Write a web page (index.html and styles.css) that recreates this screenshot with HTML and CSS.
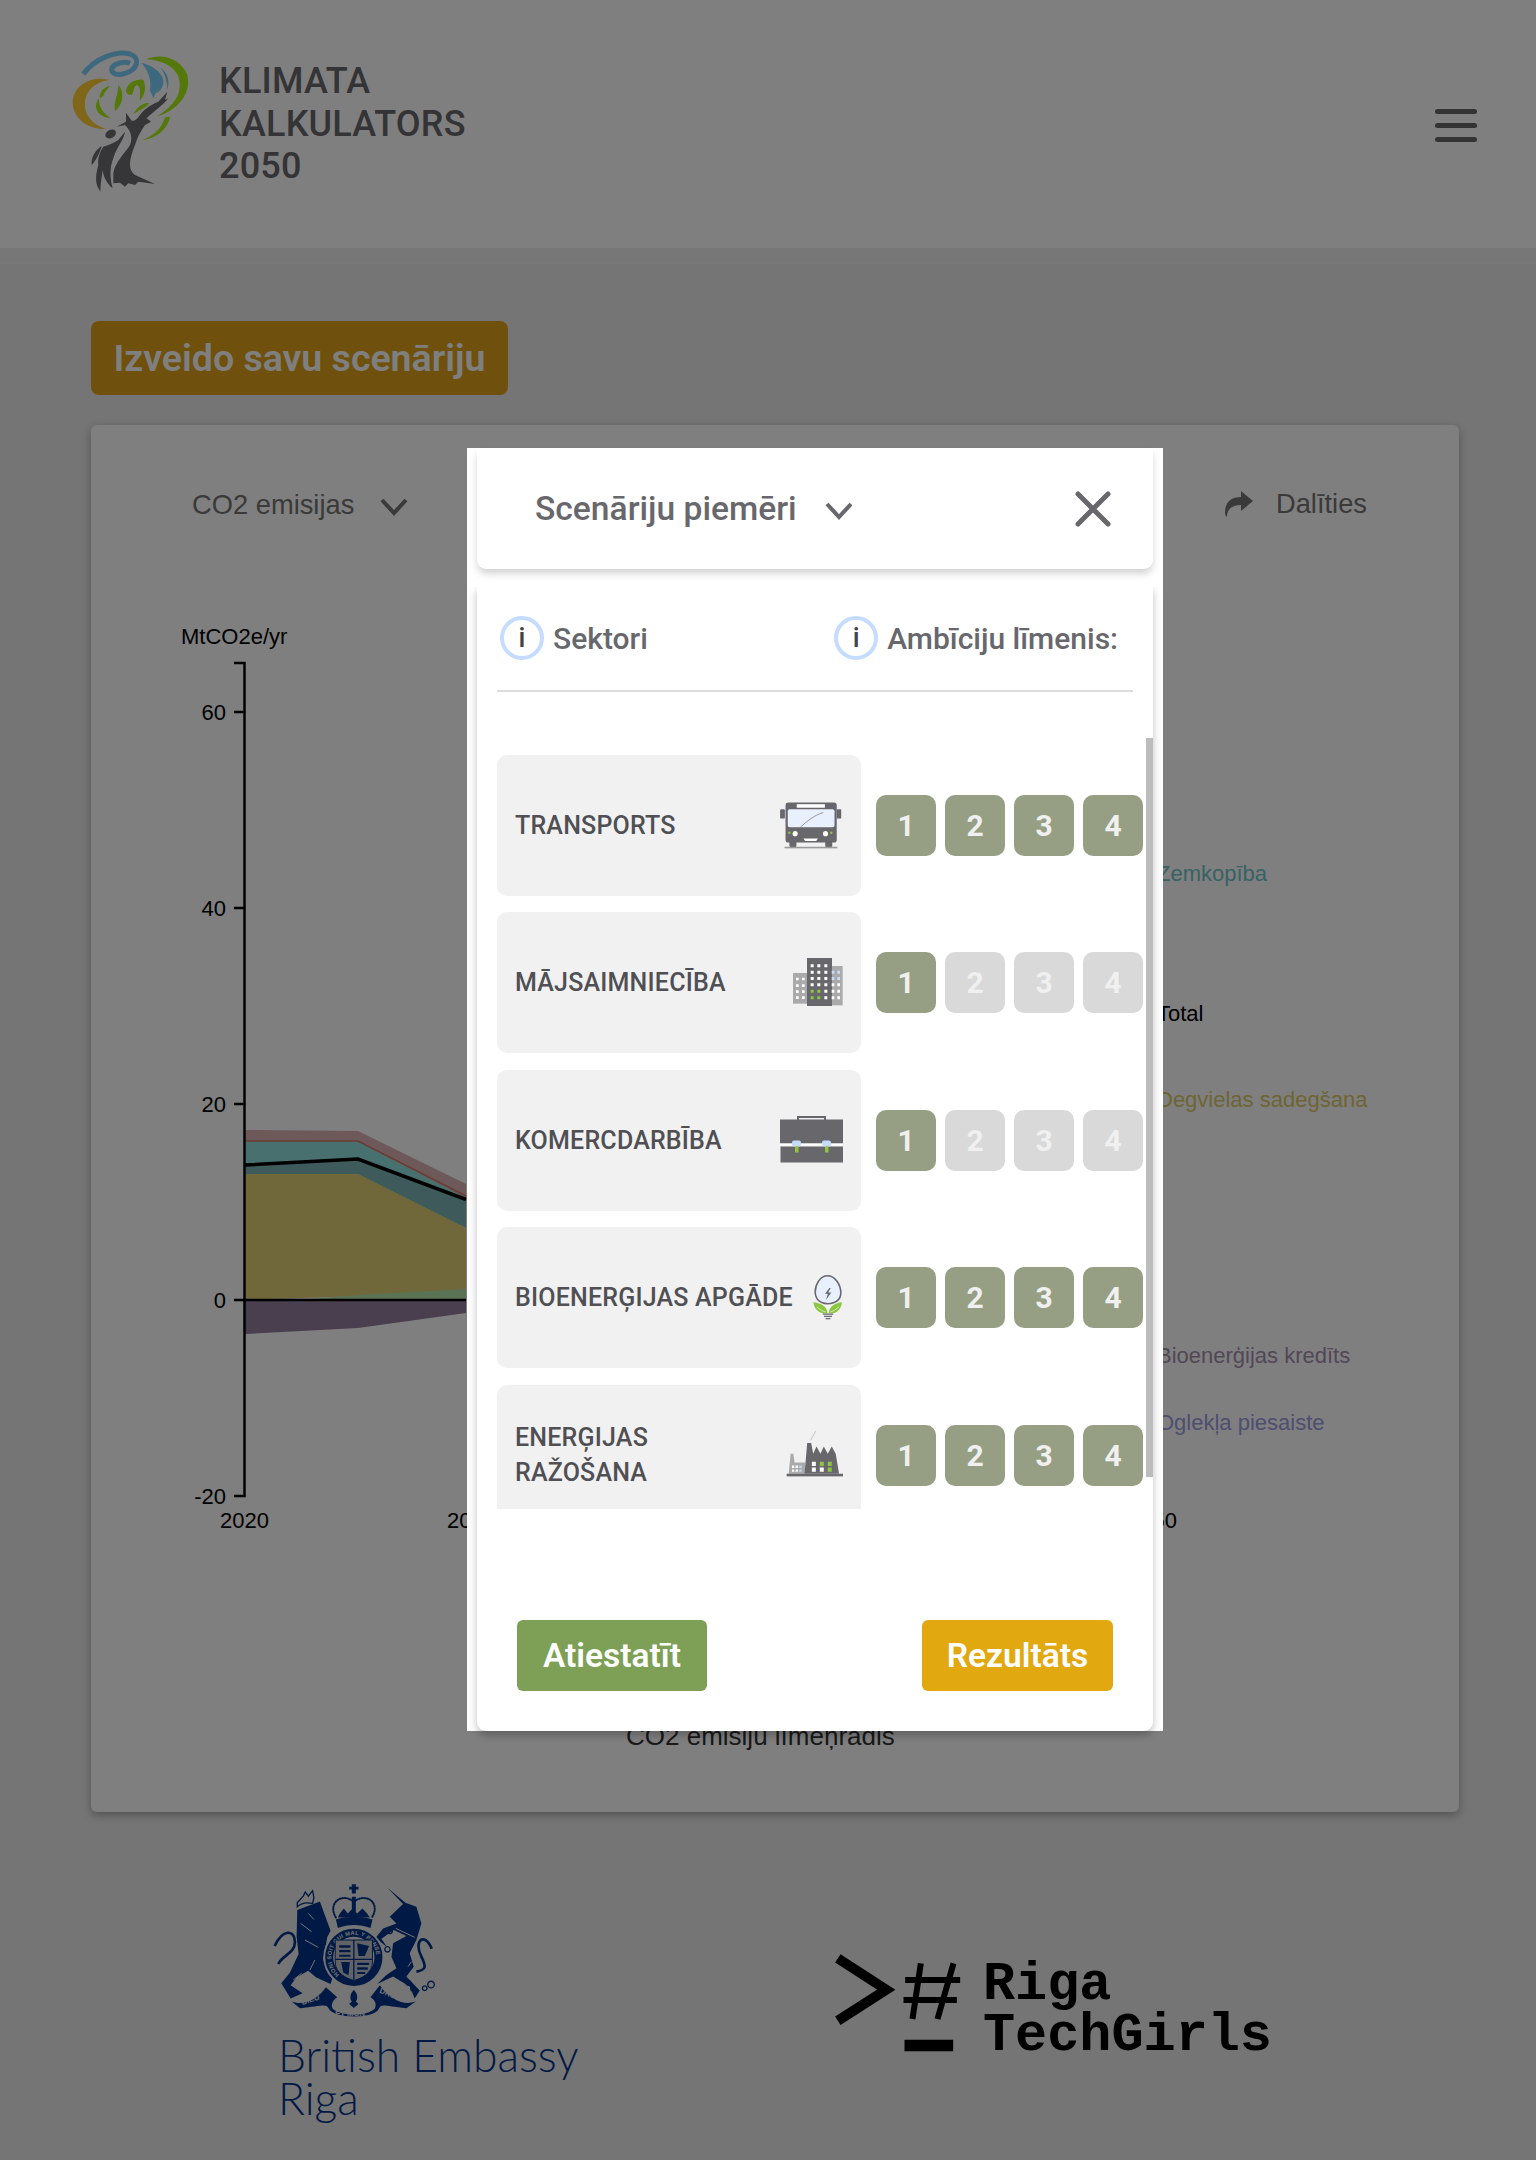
FILE: index.html
```html
<!DOCTYPE html>
<html lang="lv">
<head>
<meta charset="utf-8">
<title>Klimata kalkulators 2050</title>
<link rel="stylesheet" href="styles.css">
</head>
<body>
<header class="site-header">
  <svg class="tree-logo" viewBox="0 0 480 510" aria-hidden="true">
    <path class="c-blue-s" d="M100 132C135 85 200 60 240 72C272 84 265 118 225 130C195 140 175 125 190 108C205 95 230 95 240 100"/>
    <path class="c-blue" d="M273 98C305 105 335 125 340 150C342 170 330 185 318 190L325 170L310 205L300 180C305 150 295 120 273 98Z"/>
    <path class="c-blue" d="M330 112C350 125 362 150 352 180C350 150 345 130 330 112Z"/>
    <path class="c-green" d="M288 88C340 65 395 90 412 135C425 190 385 240 320 260C375 225 395 190 388 150C380 110 335 90 288 88Z"/>
    <path class="c-amber" d="M178 150C120 135 70 170 68 215C68 265 115 300 170 297C130 285 100 255 105 215C108 180 140 155 178 150Z"/>
    <path class="c-green" d="M180 168C160 170 145 190 150 205L160 197C165 182 175 176 180 168Z"/>
    <path class="c-green" d="M147 205C130 225 135 260 182 265C160 250 145 230 147 205Z"/>
    <path class="c-green" d="M205 165C225 185 220 225 195 243C190 215 205 195 205 165Z"/>
    <path class="c-green" d="M228 180C235 155 265 145 280 150C290 175 285 195 270 212C268 195 275 175 262 165C250 168 255 180 245 195C235 195 228 190 228 180Z"/>
    <path class="c-green" d="M250 252C260 235 280 215 298 220C285 235 270 240 250 252Z"/>
    <path class="c-green" d="M360 260C355 295 320 325 278 330C315 315 335 295 345 262Z"/>
    <path class="c-dark" d="M190 430C195 395 225 370 240 345C250 320 240 300 225 285L200 290L228 275L228 248L245 272C255 275 262 265 270 255C280 240 300 225 325 215L352 185L345 210L355 205C340 225 310 245 290 265L303 275L285 285C275 300 265 315 255 345C235 395 235 420 255 435L315 462L265 455L255 465L235 460L225 470L210 458L190 460Z"/>
    <ellipse class="c-dark" cx="182" cy="312" rx="17" ry="12" transform="rotate(-30 182 312)"/>
    <path class="c-dark" d="M160 350C175 345 190 340 205 330L225 305C222 330 200 350 190 385C180 410 178 440 188 475C170 460 160 440 158 420C155 445 150 470 152 485C135 465 135 440 145 405C142 385 150 365 160 350Z"/>
    <path class="c-dark" d="M155 348C135 360 122 385 125 405C135 395 150 370 155 348Z"/>
  </svg>
  <div class="brand">KLIMATA<br>KALKULATORS<br>2050</div>
  <div class="hamburger"><span></span><span></span><span></span></div>
</header>
<div class="header-band"></div>

<main class="content">
  <button class="cta">Izveido savu scenāriju</button>
  <section class="card">
    <div class="card-top">
      <div class="select">CO2 emisijas
        <svg class="chev" viewBox="0 0 28 18"><path d="M2 2L14 15L26 2"/></svg>
      </div>
      <div class="share">
        <svg class="share-ico" viewBox="0 0 28 26"><path d="M28 10L16 0V6C6 6 0 11 0 22C0 24 1 25 2 26C2 18 7 14 16 14V20Z"/></svg>
        Dalīties
      </div>
    </div>
    <svg class="chart" viewBox="91 620 1368 950">
      <path fill="#dab2b2" d="M245 1130L358 1131L466 1184V1200H245Z"/>
      <path fill="#8ee0de" d="M245 1141L358 1141L466 1198V1225H245Z"/>
      <path fill="#7eb4b4" d="M245 1165L358 1159L466 1199V1228L358 1174H245Z"/>
      <path fill="#e0ce74" d="M245 1174H358L466 1228V1290L358 1296L245 1300Z"/>
      <path fill="#b4e6aa" d="M300 1300L358 1295L466 1289V1300Z"/>
      <path fill="#947e9c" d="M245 1300H466V1313L358 1328L245 1334Z"/>
      <path class="thin" d="M245 1141L358 1141L466 1196"/>
      <path class="total" d="M245 1165L358 1159L466 1199.500"/>
      <path class="axis" d="M234 663H244.500V1496H234M234 712H244.500M234 908H244.500M234 1104H244.500M234 1300H466M234 1496H244.500M244.500 1300V1313"/>
      <text class="lab" x="181" y="644">MtCO2e/yr</text>
      <text class="lab end" x="226" y="720">60</text>
      <text class="lab end" x="226" y="916">40</text>
      <text class="lab end" x="226" y="1112">20</text>
      <text class="lab end" x="226" y="1308">0</text>
      <text class="lab end" x="226" y="1504">-20</text>
      <text class="lab" x="220" y="1528">2020</text>
      <text class="lab" x="447" y="1528">2030</text>
      <text class="lab" x="1128" y="1528">2050</text>
      <text class="lab c1" x="1157" y="881">Zemkopība</text>
      <text class="lab" x="1157" y="1021">Total</text>
      <text class="lab c2" x="1157" y="1107">Degvielas sadegšana</text>
      <text class="lab c3" x="1157" y="1363">Bioenerģijas kredīts</text>
      <text class="lab c4" x="1157" y="1430">Oglekļa piesaiste</text>
    </svg>
    <div class="chart-title">CO2 emisiju līmeņrādis</div>
  </section>
</main>

<footer class="logos">
  <div class="embassy">
    <svg class="arms" viewBox="90 60 520 420" aria-hidden="true">
      <defs>
        <path id="garter" d="M298 344A68 68 0 1 1 386 344"/>
      </defs>
      <path class="navy" d="M172 150L240 124L272 212L262 232L250 300L282 342L272 372L228 352L205 332L170 352L152 376L188 400L152 416L124 370L150 338L176 282L170 230Z"/>
      <path class="gap" d="M205 160L222 178M182 190L215 215M195 240L235 262M210 330L225 300M160 360L185 340"/>
      <path class="navy-line wide" d="M104 258C128 206 165 208 165 246C165 280 128 285 115 312"/>
      <path class="navy-line" d="M172 128L190 108L196 96L205 108L218 92L222 112L218 130C200 126 185 128 172 140Z"/>
      <path class="navy" d="M442 82L497 128L530 140L545 190L530 240L510 280L522 320L500 350L540 392L525 416L510 380L460 350L412 372L440 345L470 325L455 290L460 250L500 228L462 210L425 236L442 262L420 244L405 236L430 205L470 190L450 170L490 132Z"/>
      <path class="gap" d="M468 205L525 232M505 320L515 305M520 335L510 340"/>
      <path class="navy-line wide" d="M576 266C555 215 520 240 545 290C560 320 560 330 530 335"/>
      <path class="navy-line" d="M450 205A8 8 0 1 0 450.100 205M443 260A8 8 0 1 0 443.100 260M506 362A7 7 0 1 0 506.100 362M520 380A7 7 0 1 0 520.100 380M555 378A7 7 0 1 0 555.100 378M574 364A10 10 0 1 0 574.100 364"/>
      <circle class="halo" cx="342" cy="292" r="92"/>
      <path class="navy" d="M336 72H348V80H356V88H348V100H336V88H328V80H336Z"/>
      <path class="navy-line dots" d="M288 172C262 130 305 95 342 125C380 95 424 130 396 172"/>
      <path class="navy" d="M336 110H348V165H336ZM300 160L312 145L324 160L338 145L352 160L368 145L382 160L390 172H294Z"/>
      <path class="navy" d="M288 178C310 168 375 168 398 178L392 204C360 192 325 192 294 204Z"/>
      <circle class="ring" cx="342" cy="292" r="74"/>
      <text class="garter-text"><textPath href="#garter">HONI SOIT QUI MAL Y PENSE</textPath></text>
      <path class="shield" d="M286 240H398V306C398 340 365 355 342 362C320 355 286 340 286 306Z"/>
      <path class="navy-line" d="M342 240V362M286 298H398"/>
      <path class="navy" d="M298 256H332V263H298ZM298 270H332V277H298ZM298 284H332V290H298ZM352 250L388 258L375 288H356ZM352 308H388V315H352ZM352 322H384V329H352ZM352 336H376V342H352ZM304 306L330 306L326 346L310 338Z"/>
      <path class="navy" d="M155 425C195 440 235 415 258 382L292 412C280 420 272 432 278 446C300 470 385 470 405 446C412 432 405 420 392 412L420 376C450 415 490 440 528 425L500 445C440 440 425 430 418 445C408 478 280 478 266 445C258 430 240 440 180 445Z"/>
      <text class="rib-text" x="188" y="435" transform="rotate(-18 188 435)">DIEU</text>
      <text class="rib-text" x="286" y="468">ET MON</text>
      <text class="rib-text" x="418" y="398" transform="rotate(22 418 398)">DROIT</text>
      <path class="navy" d="M342 390C352 398 356 415 348 425L356 432L342 444L328 432L336 425C328 415 332 398 342 390Z"/>
    </svg>
    <div class="embassy-name">British Embassy<br>Riga</div>
  </div>
  <div class="techgirls">
    <svg class="tg-mark" viewBox="105 100 380 300" aria-hidden="true">
      <path class="tg-line" d="M113 113L258 207L113 300"/>
      <path class="tg-hash" d="M315 178H480M310 238H470M362 128L337 295M460 128L412 295"/>
      <path d="M313 357H459V392H313Z"/>
    </svg>
    <div class="tg-name">Riga<br>TechGirls</div>
  </div>
</footer>

<div class="overlay"></div>

<aside class="modal">
  <div class="modal-head">
    <span class="modal-title">Scenāriju piemēri</span>
    <svg class="chev small" viewBox="0 0 28 18"><path d="M2 2L14 15L26 2"/></svg>
    <svg class="close" viewBox="0 0 36 36"><path d="M3 3L33 33M33 3L3 33"/></svg>
  </div>
  <div class="modal-body">
    <div class="cols">
      <div class="col-title"><span class="info">i</span>Sektori</div>
      <div class="col-title"><span class="info">i</span>Ambīciju līmenis:</div>
    </div>
    <div class="scroll">
      <div class="row">
        <div class="sector"><span class="sector-name">TRANSPORTS</span>
          <svg class="ico bus" viewBox="50 55 200 150">
            <path fill="#e8f0fe" d="M62 72H240V122H62Z"/>
            <rect class="g" x="55" y="81" width="15" height="29" rx="3"/><rect class="g" x="232" y="81" width="14" height="29" rx="3"/>
            <rect class="g" x="84" y="170" width="22" height="30" rx="6"/><rect class="g" x="196" y="170" width="22" height="30" rx="6"/>
            <rect class="g" x="72" y="60" width="160" height="125" rx="9"/>
            <rect fill="#fff" x="107" y="65" width="88" height="11"/>
            <rect fill="#e8f0fe" x="79" y="81" width="146" height="56" rx="6"/>
            <path class="hair" d="M118 137C140 118 160 100 190 91"/>
            <circle fill="#fff" cx="102" cy="157" r="8"/><circle fill="#fff" cx="197" cy="157" r="8"/>
            <circle fill="#8cc63f" cx="84" cy="154" r="4"/><circle fill="#8cc63f" cx="215" cy="154" r="4"/>
            <path fill="#fff" d="M128 172H173L168 180H133Z"/><rect fill="#999" x="69" y="198" width="165" height="5"/>
          </svg>
        </div>
        <div class="levels"><button class="lvl on">1</button><button class="lvl on">2</button><button class="lvl on">3</button><button class="lvl on">4</button></div>
      </div>
      <div class="row">
        <div class="sector"><span class="sector-name">MĀJSAIMNIECĪBA</span>
          <svg class="ico flats" viewBox="96 533 150 144">
            <rect fill="#aaa" x="96" y="578" width="45" height="92"/><rect fill="#aaa" x="205" y="557" width="40" height="118"/>
            <rect class="g" x="138" y="533" width="75" height="144"/>
            <path class="win" d="M105 592h8v8h-8zM123 592h8v8h-8zM105 612h8v8h-8zM123 612h8v8h-8zM105 630h8v8h-8zM123 630h8v8h-8zM105 648h8v8h-8zM123 648h8v8h-8z"/>
            <path class="win" d="M149 552h9v9h-9zM169 552h9v9h-9zM190 552h9v9h-9zM149 571h9v9h-9zM169 571h9v9h-9zM190 571h9v9h-9zM149 590h9v9h-9zM169 590h9v9h-9zM190 590h9v9h-9zM149 609h9v9h-9zM169 609h9v9h-9zM190 609h9v9h-9zM190 628h9v9h-9zM190 648h9v9h-9z"/>
            <path fill="#8cc63f" d="M149 628h9v9h-9zM169 628h9v9h-9zM149 648h9v9h-9zM169 648h9v9h-9z"/>
            <path fill="#c6dcfa" d="M212 571h8v9h-8zM229 571h8v9h-8zM212 590h8v9h-8zM229 590h8v9h-8z"/>
            <path class="win" d="M212 609h8v9h-8zM229 609h8v9h-8zM212 628h8v9h-8zM229 628h8v9h-8zM212 648h8v9h-8zM229 648h8v9h-8z"/>
          </svg>
        </div>
        <div class="levels"><button class="lvl on">1</button><button class="lvl">2</button><button class="lvl">3</button><button class="lvl">4</button></div>
      </div>
      <div class="row">
        <div class="sector"><span class="sector-name">KOMERCDARBĪBA</span>
          <svg class="ico case" viewBox="0 0 63 47">
            <path d="M18 5V1.500H45V5" fill="none" stroke="#67676c" stroke-width="2"/>
            <path class="g" d="M0 4H63V28H0Z"/><path class="g" d="M.5 31H63V47H.5Z"/>
            <rect fill="#fff" y="28" width="63" height="2"/>
            <rect fill="#c6dcfa" x="12" y="25" width="9" height="6" rx="2"/><rect fill="#c6dcfa" x="42" y="25" width="9" height="6" rx="2"/>
            <rect fill="#8cc63f" x="15" y="31" width="3.500" height="6"/><rect fill="#8cc63f" x="45" y="31" width="3.500" height="6"/>
          </svg>
        </div>
        <div class="levels"><button class="lvl on">1</button><button class="lvl">2</button><button class="lvl">3</button><button class="lvl">4</button></div>
      </div>
      <div class="row">
        <div class="sector"><span class="sector-name">BIOENERĢIJAS APGĀDE</span>
          <svg class="ico bulb" viewBox="120 65 95 147">
            <path fill="#e8f0fe" d="M168 68C195 68 213 100 213 125C213 145 200 158 168 160C135 158 126 140 126 122C126 100 142 68 168 68Z"/>
            <path fill="none" stroke="#67676c" stroke-width="5" d="M166 71C190 71 208 100 208 125C208 145 195 158 166 160C137 158 127 140 127 122C127 100 142 71 166 71Z"/>
            <path class="g" d="M172 110L158 128H167L161 148L178 124H168L176 110Z"/>
            <path fill="#8cc63f" d="M121 155C140 157 165 165 166 190C140 192 125 180 121 155ZM212 155C193 157 172 165 170 190C195 192 208 180 212 155Z"/>
            <path fill="none" stroke="#fff" stroke-width="2" d="M132 170C142 178 150 184 160 186M202 170C192 178 184 184 175 186"/>
            <path class="g" d="M151 191H184V195H151ZM155 198H180V202H155ZM160 205H175V209H160Z"/>
          </svg>
        </div>
        <div class="levels"><button class="lvl on">1</button><button class="lvl on">2</button><button class="lvl on">3</button><button class="lvl on">4</button></div>
      </div>
      <div class="row">
        <div class="sector"><span class="sector-name">ENERĢIJAS<br>RAŽOŠANA</span>
          <svg class="ico factory" viewBox="44 540 172 141">
            <path class="hair light" d="M118 570L133 542"/>
            <path fill="#aaa" d="M52 670L58 610H66L70 636H102V670Z"/>
            <path class="g" d="M100 670L108 577H120L126 610L136 588L148 610L158 588L170 610L182 588L194 610L204 670Z"/>
            <rect class="g" x="46" y="670" width="170" height="8"/>
            <path fill="#fff" d="M62 645h7v8h-7zM73 645h7v8h-7zM62 657h7v7h-7zM73 657h7v7h-7z"/>
            <path fill="#c6dcfa" d="M84 645h7v8h-7zM84 657h7v7h-7z"/>
            <path class="win" d="M122 634h12v13h-12zM146 651h12v13h-12zM122 651h12v13h-12z"/>
            <path fill="#8cc63f" d="M146 634h12v13h-12zM170 634h12v13h-12zM170 651h12v13h-12z"/>
          </svg>
        </div>
        <div class="levels"><button class="lvl on">1</button><button class="lvl on">2</button><button class="lvl on">3</button><button class="lvl on">4</button></div>
      </div>
    </div>
    <div class="scrollbar"></div>
    <div class="actions">
      <button class="act reset">Atiestatīt</button>
      <button class="act result">Rezultāts</button>
    </div>
  </div>
</aside>
</body>
</html>
```
FILE: styles.css
```css
* { box-sizing: border-box; }
html, body { margin: 0; padding: 0; }
body {
  width: 1536px;
  height: 2160px;
  overflow: hidden;
  position: relative;
  background: #eaeaea;
  font-family: "Roboto", "Liberation Sans", sans-serif;
  color: #67676c;
}
button { font-family: inherit; border: 0; cursor: pointer; }

/* header */
.site-header {
  height: 248px;
  background: #fff;
  display: flex;
  align-items: center;
  padding: 0 59px 0 50px;
}
.tree-logo { width: 160px; height: 170px; margin-bottom: 18px; flex: none; }
.c-blue { fill: #7cd0fa; }
.c-blue-s { fill: none; stroke: #7cd0fa; stroke-width: 15; }
.c-green { fill: #aaf014; }
.c-amber { fill: #ffcc32; }
.c-dark { fill: #6c6c70; }
.brand {
  margin-left: 9px;
  font-size: 36px;
  line-height: 42.5px;
  font-weight: 500;
  color: #68686c;
  letter-spacing: .2px;
}
.hamburger { margin: 2px 0 0 auto; display: flex; flex-direction: column; gap: 9px; width: 42px; }
.hamburger span { display: block; height: 5px; border-radius: 3px; background: #666; }
.header-band { height: 16px; background: #eeeeee; border-bottom: 1px solid #f2f2f2; }

/* content */
.content { padding: 57px 77px 0 91px; }
.cta {
  display: block;
  width: 417px;
  height: 74px;
  border-radius: 8px;
  background: #dea21a;
  color: #fff;
  font-size: 37.5px;
  font-weight: 600;
  padding: 0;
}
.card {
  margin-top: 30px;
  height: 1387px;
  background: #fff;
  border-radius: 6px;
  box-shadow: 0 3px 8px rgba(0, 0, 0, .3);
  display: flex;
  flex-direction: column;
}
.card-top {
  height: 195px;
  padding: 58px 92px 0 101px;
  display: flex;
  justify-content: space-between;
  align-items: flex-start;
  font-family: "Liberation Sans", sans-serif;
  font-size: 27.300px;
  color: #747474;
}
.select { display: flex; align-items: center; gap: 26px; height: 44px; }
.share { display: flex; align-items: center; gap: 23px; height: 42px; }
.chev { width: 28px; height: 18px; fill: none; stroke: #747474; stroke-width: 4; margin-top: 3px; }
.chev.small { margin: 5px 0 0 28px; stroke: #67676c; }
.share-ico { width: 28px; height: 26px; fill: #747474; }
.chart { width: 1368px; height: 950px; display: block; }
.axis { fill: none; stroke: #000; stroke-width: 2.500; }
.total { fill: none; stroke: #000; stroke-width: 3.500; }
.thin { fill: none; stroke: #da7466; stroke-width: 1.500; }
.lab { font-family: "Liberation Sans", sans-serif; font-size: 22px; fill: #000; }
.end { text-anchor: end; }
.c1 { fill: #70c4c8; }
.c2 { fill: #dcc868; }
.c3 { fill: #a48fac; }
.c4 { fill: #9c9ce0; }
.chart-title {
  margin-top: 151px;
  padding-left: 535px;
  font-family: "Liberation Sans", sans-serif;
  font-size: 26px;
  color: #333;
}

/* footer logos */
.logos {
  display: flex;
  align-items: flex-start;
  padding: 68px 0 0 270px;
}
.embassy { width: 565px; }
.arms { width: 173px; height: 140px; display: block; }
.navy { fill: #02348a; }
.navy-line { fill: none; stroke: #02348a; stroke-width: 4; }
.dots { stroke-width: 6; stroke-dasharray: 3 5; stroke-linecap: round; }
.wide { stroke-width: 8; }
.gap { fill: none; stroke: #eaeaea; stroke-width: 3; }
.halo { fill: #eaeaea; }
.ring { fill: none; stroke: #02348a; stroke-width: 24; }
.shield { fill: #c0c4cc; stroke: #02348a; stroke-width: 3; }
.garter-text { font-family: "Liberation Sans", sans-serif; font-size: 17px; font-weight: 700; fill: #eaeaea; letter-spacing: 1px; }
.rib-text { font-family: "Liberation Sans", sans-serif; font-size: 23px; font-weight: 700; fill: #eaeaea; }
.embassy-name {
  margin: 13px 0 0 8px;
  font-family: "Lato", sans-serif;
  font-weight: 300;
  font-size: 44.400px;
  line-height: 43px;
  color: #02348a;
}
.techgirls { display: flex; align-items: flex-start; margin-top: 74px; gap: 21px; }
.tg-mark { width: 127px; height: 100px; display: block; }
.tg-line { fill: none; stroke: #000; stroke-width: 30; }
.tg-hash { fill: none; stroke: #000; stroke-width: 18; }
.tg-name {
  font-family: "Liberation Mono", monospace;
  font-weight: 700;
  font-size: 53.500px;
  line-height: 51px;
  color: #000;
  margin-top: 5px;
}

/* overlay + modal */
.overlay { position: absolute; inset: 0; background: rgba(0, 0, 0, .5); }
.modal {
  position: absolute;
  left: 467px;
  top: 448px;
  width: 696px;
  height: 1283px;
  background: #fff;
  padding: 0 10px;
}
.modal-head {
  height: 121px;
  background: #fff;
  border-radius: 0 0 9px 9px;
  box-shadow: 0 5px 8px -1px rgba(0, 0, 0, .2);
  display: flex;
  align-items: center;
  padding: 0 42px 0 58px;
  position: relative;
}
.modal-title { font-size: 33.600px; font-weight: 500; }
.close { width: 36px; height: 36px; margin-left: auto; fill: none; stroke: #67676c; stroke-width: 5; stroke-linecap: round; }
.modal-body {
  position: relative;
  margin-top: 18px;
  height: 1144px;
  background: #fff;
  border-radius: 0 0 9px 9px;
  box-shadow: 0 4px 8px rgba(0, 0, 0, .25);
  clip-path: inset(0 -14px -14px -14px);
  padding: 0 20px;
}
.cols {
  display: flex;
  justify-content: space-between;
  padding: 29px 15px 30px 3px;
  border-bottom: 2px solid #dddddd;
}
.col-title { display: flex; align-items: center; gap: 9px; font-size: 30px; font-weight: 500; height: 44px; }
.info {
  width: 44px;
  height: 44px;
  border-radius: 50%;
  border: 4px solid #c5dcff;
  display: flex;
  align-items: center;
  justify-content: center;
  color: #444;
  font-size: 27px;
  font-weight: 500;
}
.scroll {
  height: 817px;
  overflow: hidden;
  padding-top: 63px;
  margin-right: -20px;
  display: flex;
  flex-direction: column;
  gap: 16.400px;
}
.row { display: flex; align-items: center; gap: 15px; flex: none; }
.sector {
  width: 364px;
  height: 141px;
  flex: none;
  background: #f1f1f1;
  border-radius: 10px;
  padding: 0 18px;
  display: flex;
  align-items: center;
  justify-content: space-between;
  font-size: 25px;
  letter-spacing: .2px;
  line-height: 35px;
  font-weight: 500;
  color: #4f4f54;
}
.ico { height: 48px; display: block; flex: none; margin-bottom: 2px; }
.bus { width: 65px; }
.flats { width: 50px; }
.case { width: 63px; }
.bulb { width: 30px; }
.factory { width: 57px; }
.g { fill: #67676c; }
.win { fill: #fff; }
.hair { fill: none; stroke: #67676c; stroke-width: 2; }
.light { stroke: #aaa; }
.levels { display: flex; gap: 9px; }
.lvl {
  width: 60px;
  height: 61px;
  border-radius: 10px;
  background: #d9d9d9;
  color: #f0f0f0;
  font-size: 30px;
  font-weight: 700;
  padding: 0;
}
.lvl.on { background: #969f84; }
.scrollbar { position: absolute; right: 0; top: 151px; width: 7px; height: 739px; background: #bcbcbc; }
.actions { display: flex; justify-content: space-between; padding: 111px 20px 0; }
.act { width: 190px; height: 71px; border-radius: 6px; color: #fff; font-size: 33.500px; font-weight: 600; padding: 0; }
.reset { background: #7e9f56; }
.result { background: #e2a810; width: 191px; }
```
